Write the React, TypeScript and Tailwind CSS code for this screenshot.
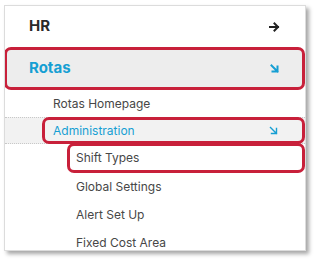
const red = "border-[3px] border-[#c8203a] rounded-[7px]";

function ArrowRight() {
  return (
    <svg width="11" height="10" viewBox="0 0 11 10" fill="none">
      <path d="M1 5h8M5.5 1.5L9 5l-3.5 3.5" stroke="#222" strokeWidth="2" strokeLinecap="square" />
    </svg>
  );
}

function ArrowDownRight({ w = 2 }: { w?: number }) {
  return (
    <svg width="9" height="9" viewBox="0 0 9 9" fill="none">
      <path d="M1.5 1.5L7.5 7.5M7.5 2.5v5h-5" stroke="#169fd3" strokeWidth={w} strokeLinecap="square" />
    </svg>
  );
}

export default function App() {
  return (
    <div className="w-[314px] h-[259px] bg-white pt-[5px] pl-[4px] font-['Inter',sans-serif]">
      <div className="w-[302px] h-[246px] bg-white border border-[#dcdcdc] shadow-[3px_3px_4px_rgba(0,0,0,0.35)] overflow-hidden">
        <div className="h-[41px] flex items-center justify-between pl-[24px] pr-[25px]">
          <span className="text-[15px] font-bold text-[#2a2a2a]">HR</span>
          <ArrowRight />
        </div>

        <div className={`h-[43px] -ml-px flex items-center justify-between pl-[22px] pr-[23px] bg-[#ededed] ${red}`}>
          <span className="text-[15px] font-bold text-[#169fd3]">Rotas</span>
          <ArrowDownRight />
        </div>

        <div className="h-[27px] flex items-center pl-[48px] text-[12px] text-[#474747]">Rotas Homepage</div>

        <div className="h-[27px] bg-[#f2f2f2] border-y border-dotted border-[#c8c8c8] pl-[37px]">
          <div className={`-mt-px h-[27px] flex items-center justify-between pl-[8px] pr-[24px] ${red} rounded-[6px]`}>
            <span className="text-[12px] text-[#169fd3]">Administration</span>
            <ArrowDownRight w={1.4} />
          </div>
        </div>

        <div className="h-[30px] pl-[62px]">
          <div className={`h-[30px] -mt-px flex items-center pl-[6px] bg-white ${red} rounded-[6px]`}>
            <span className="text-[12px] text-[#474747]">Shift Types</span>
          </div>
        </div>

        {["Global Settings", "Alert Set Up", "Fixed Cost Area"].map((t) => (
          <div key={t} className="h-[28px] flex items-center pl-[71px] text-[12px] text-[#474747]">
            {t}
          </div>
        ))}
      </div>
    </div>
  );
}
